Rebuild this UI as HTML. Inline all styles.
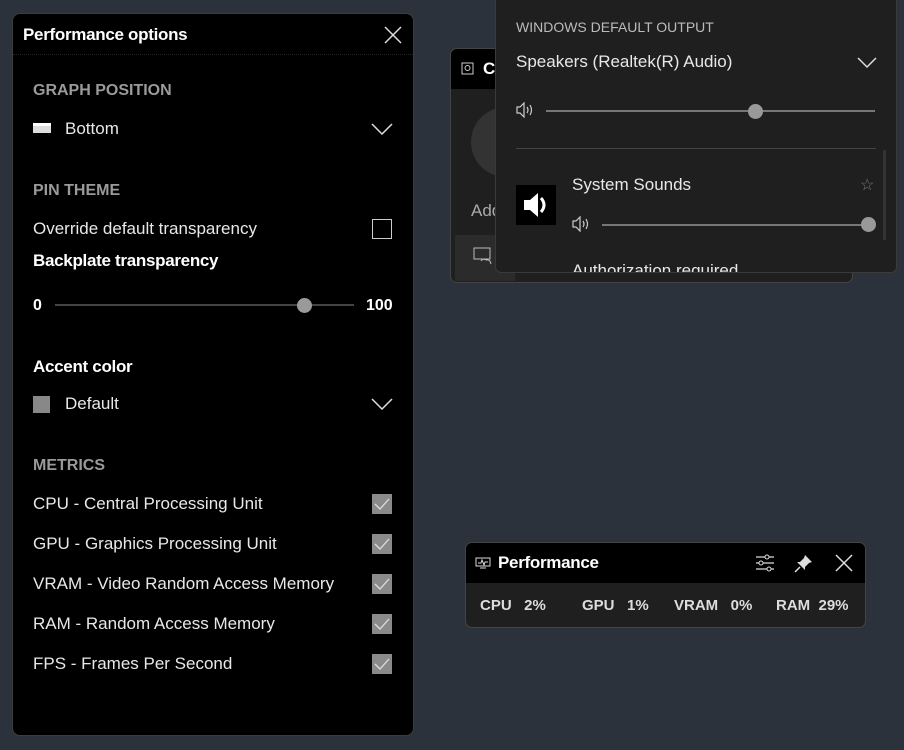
<!DOCTYPE html>
<html><head><meta charset="utf-8"><style>
*{margin:0;padding:0;box-sizing:border-box}
body{width:904px;height:750px;background:#2c323c;font-family:"Liberation Sans",sans-serif;color:#fff;position:relative;overflow:hidden}
.a{position:absolute;white-space:nowrap}
.sec{color:#9a9a9a;font-weight:bold;font-size:16px}
.t{font-size:17px;color:#e8e8e8}
.cb{position:absolute;width:20px;height:20px;background:#8a8a8a}
.cb svg{position:absolute;left:2px;top:3px}
.chev{position:absolute}
</style></head><body>

<!-- Capture widget behind -->
<div class="a" style="left:450px;top:48px;width:403px;height:235px;background:#1f1f1f;border:1px solid #444;border-radius:7px;overflow:hidden">
 <div style="height:40px;background:#000"></div>
 <svg class="a" style="left:10px;top:13px" width="14" height="14"><rect x="1" y="1" width="11" height="11" stroke="#ccc" fill="none"/><circle cx="6.5" cy="6" r="2.5" stroke="#ccc" fill="none"/></svg>
 <div class="a" style="left:32px;top:10px;font-size:17px;font-weight:bold">C</div>
 <div class="a" style="left:20px;top:58px;width:70px;height:70px;border-radius:50%;background:#333"></div>
 <div class="a" style="left:20px;top:152px;font-size:17px;color:#aaa">Add</div>
 <div class="a" style="left:4px;top:186px;width:60px;height:46px;background:#2b2b2b"></div>
 <svg class="a" style="left:22px;top:198px" width="20" height="18"><rect x="1" y="1" width="16" height="11" stroke="#bbb" fill="none"/><path d="M8 14 Q10 11 13 13 Q17 12 18 17" stroke="#bbb" fill="none"/></svg>
</div>

<!-- Audio panel -->
<div class="a" style="left:495px;top:-8px;width:402px;height:281px;background:#1f1f1f;border:1px solid #3a3a3a;border-radius:6px;overflow:hidden">
 <div class="a" style="left:20px;top:26px;font-size:14px;color:#bbb">WINDOWS DEFAULT OUTPUT</div>
 <div class="a" style="left:20px;top:59px;font-size:17px;color:#e8e8e8">Speakers (Realtek(R) Audio)</div>
 <svg class="chev" style="left:361px;top:64px" width="20" height="12"><path d="M1 1 L10 10 L19 1" stroke="#ddd" stroke-width="1.5" fill="none"/></svg>
 <svg class="a" style="left:20px;top:109px" width="22" height="16"><path d="M1 5 H4 L8 1 V15 L4 11 H1 Z" stroke="#ccc" stroke-width="1.2" fill="none"/><path d="M11 5 Q13 8 11 11 M14 3 Q17 8 14 13" stroke="#ccc" stroke-width="1.2" fill="none"/></svg>
 <div class="a" style="left:50px;top:117px;width:329px;height:2px;background:#777"></div>
 <div class="a" style="left:252px;top:111px;width:15px;height:15px;border-radius:50%;background:#999"></div>
 <div class="a" style="left:20px;top:155px;width:360px;height:1px;background:#444"></div>
 <div class="a" style="left:387px;top:157px;width:3px;height:90px;background:#333"></div>
 <div class="a" style="left:20px;top:192px;width:40px;height:40px;background:#000"></div>
 <svg class="a" style="left:24px;top:196px" width="32" height="32"><path d="M4 11 H10 L18 4 V28 L10 21 H4 Z" fill="#fff"/><path d="M21 9 Q27 16 21 23" stroke="#fff" stroke-width="3" fill="none"/></svg>
 <div class="a" style="left:76px;top:182px;font-size:17px;color:#e8e8e8">System Sounds</div>
 <div class="a" style="left:364px;top:182px;font-size:16px;color:#777">☆</div>
 <svg class="a" style="left:76px;top:223px" width="22" height="16"><path d="M1 5 H4 L8 1 V15 L4 11 H1 Z" stroke="#ccc" stroke-width="1.2" fill="none"/><path d="M11 5 Q13 8 11 11 M14 3 Q17 8 14 13" stroke="#ccc" stroke-width="1.2" fill="none"/></svg>
 <div class="a" style="left:106px;top:231px;width:268px;height:2px;background:#777"></div>
 <div class="a" style="left:365px;top:224px;width:15px;height:15px;border-radius:50%;background:#999"></div>
 <div class="a" style="left:76px;top:268px;font-size:17px;color:#e8e8e8">Authorization required</div>
</div>

<!-- Performance options panel -->
<div class="a" style="left:12px;top:13px;width:402px;height:723px;background:#000;border:1px solid #3c3c3c;border-radius:8px">
 <div class="a" style="left:10px;top:11px;font-size:17px;font-weight:bold;color:#fff;letter-spacing:-0.3px">Performance options</div>
 <svg class="a" style="left:370px;top:11px" width="20" height="20"><path d="M2 2 L18 18 M18 2 L2 18" stroke="#ddd" stroke-width="1.5"/></svg>
 <div class="a" style="left:0;top:40px;width:400px;height:1px;border-top:1px dotted #222"></div>
 <div class="a sec" style="left:20px;top:68px">GRAPH POSITION</div>
 <div class="a" style="left:20px;top:109px;width:18px;height:10px;background:#ddd;border-top:3px solid #fff"></div>
 <div class="a t" style="left:52px;top:105px">Bottom</div>
 <svg class="chev" style="left:358px;top:109px" width="22" height="12"><path d="M1 1 L11 11 L21 1" stroke="#ddd" stroke-width="1.5" fill="none"/></svg>
 <div class="a sec" style="left:20px;top:168px">PIN THEME</div>
 <div class="a t" style="left:20px;top:205px">Override default transparency</div>
 <div class="a" style="left:359px;top:205px;width:20px;height:20px;border:1.5px solid #ccc"></div>
 <div class="a" style="left:20px;top:237px;font-size:17px;font-weight:bold;letter-spacing:-0.3px">Backplate transparency</div>
 <div class="a" style="left:20px;top:283px;font-size:16px;font-weight:bold">0</div>
 <div class="a" style="left:42px;top:290px;width:299px;height:2px;background:#444"></div>
 <div class="a" style="left:284px;top:284px;width:15px;height:15px;border-radius:50%;background:#9a9a9a"></div>
 <div class="a" style="left:353px;top:283px;font-size:16px;font-weight:bold">100</div>
 <div class="a" style="left:20px;top:343px;font-size:17px;font-weight:bold;letter-spacing:-0.3px">Accent color</div>
 <div class="a" style="left:20px;top:382px;width:17px;height:17px;background:#888"></div>
 <div class="a t" style="left:52px;top:380px">Default</div>
 <svg class="chev" style="left:358px;top:384px" width="22" height="12"><path d="M1 1 L11 11 L21 1" stroke="#ddd" stroke-width="1.5" fill="none"/></svg>
 <div class="a sec" style="left:20px;top:443px">METRICS</div>
 <div class="a t" style="left:20px;top:480px">CPU - Central Processing Unit</div>
 <div class="a t" style="left:20px;top:520px">GPU - Graphics Processing Unit</div>
 <div class="a t" style="left:20px;top:560px">VRAM - Video Random Access Memory</div>
 <div class="a t" style="left:20px;top:600px">RAM - Random Access Memory</div>
 <div class="a t" style="left:20px;top:640px">FPS - Frames Per Second</div>
 <div class="cb" style="left:359px;top:480px"><svg width="16" height="14"><path d="M1 7 L6 12 L15 2" stroke="#ddd" stroke-width="1.3" fill="none"/></svg></div>
 <div class="cb" style="left:359px;top:520px"><svg width="16" height="14"><path d="M1 7 L6 12 L15 2" stroke="#ddd" stroke-width="1.3" fill="none"/></svg></div>
 <div class="cb" style="left:359px;top:560px"><svg width="16" height="14"><path d="M1 7 L6 12 L15 2" stroke="#ddd" stroke-width="1.3" fill="none"/></svg></div>
 <div class="cb" style="left:359px;top:600px"><svg width="16" height="14"><path d="M1 7 L6 12 L15 2" stroke="#ddd" stroke-width="1.3" fill="none"/></svg></div>
 <div class="cb" style="left:359px;top:640px"><svg width="16" height="14"><path d="M1 7 L6 12 L15 2" stroke="#ddd" stroke-width="1.3" fill="none"/></svg></div>
</div>

<!-- Performance widget -->
<div class="a" style="left:465px;top:542px;width:401px;height:86px;background:#1f1f1f;border:1px solid #444;border-radius:7px;overflow:hidden">
 <div style="height:40px;background:#000"></div>
 <svg class="a" style="left:9px;top:14px" width="16" height="12"><rect x="1" y="1" width="14" height="8" stroke="#ddd" fill="none"/><path d="M3 6 L6 6 L7 3 L9 8 L10 5 L13 5" stroke="#ddd" fill="none"/><path d="M5 11 H11" stroke="#ddd"/></svg>
 <div class="a" style="left:32px;top:10px;font-size:17px;font-weight:bold;letter-spacing:-0.3px">Performance</div>
 <svg class="a" style="left:289px;top:10px" width="20" height="20"><path d="M1 4 H19 M1 10 H19 M1 16 H19" stroke="#ddd" stroke-width="1.3"/><circle cx="12" cy="4" r="2" fill="#000" stroke="#ddd"/><circle cx="6" cy="10" r="2" fill="#000" stroke="#ddd"/><circle cx="14" cy="16" r="2" fill="#000" stroke="#ddd"/></svg>
 <svg class="a" style="left:328px;top:10px" width="20" height="20"><path d="M11 2 L18 9 L15 10 L11 14 L11 17 L3 9 L6 9 L10 5 Z" fill="#ddd"/><path d="M6 14 L1 19" stroke="#ddd" stroke-width="1.5"/></svg>
 <svg class="a" style="left:368px;top:10px" width="20" height="20"><path d="M2 2 L18 18 M18 2 L2 18" stroke="#ddd" stroke-width="1.5"/></svg>
 <div class="a" style="left:14px;top:54px;font-size:15px;font-weight:bold;color:#ddd">CPU&nbsp;&nbsp;&nbsp;2%</div>
 <div class="a" style="left:116px;top:54px;font-size:15px;font-weight:bold;color:#ddd">GPU&nbsp;&nbsp;&nbsp;1%</div>
 <div class="a" style="left:208px;top:54px;font-size:15px;font-weight:bold;color:#ddd">VRAM&nbsp;&nbsp;&nbsp;0%</div>
 <div class="a" style="left:310px;top:54px;font-size:15px;font-weight:bold;color:#ddd">RAM&nbsp;&nbsp;29%</div>
</div>
</body></html>
